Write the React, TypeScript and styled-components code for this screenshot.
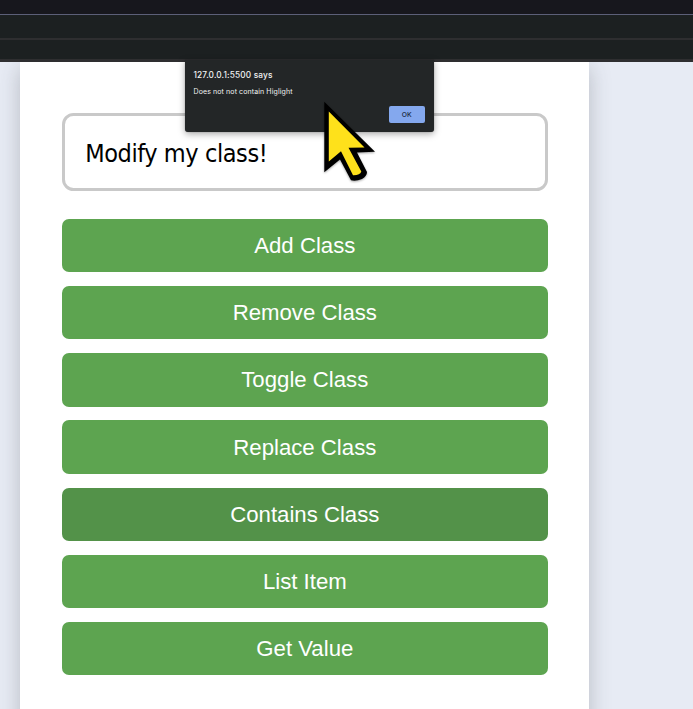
import React from "react";
import styled, { createGlobalStyle } from "styled-components";

const GlobalStyle = createGlobalStyle`
  * { box-sizing: border-box; }
  html, body { margin: 0; padding: 0; overflow: hidden; }
  body { background: #e7ebf4; }
`;

const Screen = styled.div`
  position: relative;
  display: flex;
  flex-direction: column;
  width: 693px;
  height: 709px;
  overflow: hidden;
  background: #e7ebf4;
`;

const TabStrip = styled.div`
  height: 15px;
  flex: none;
  background: #17171d;
  border-bottom: 1px solid #5c5f78;
`;

const BrowserBar = styled.div<{ $height: number; $line: number }>`
  height: ${(p) => p.$height}px;
  flex: none;
  background: #1c2021;
  border-bottom: ${(p) => p.$line}px solid #2e2e30;
`;

const Viewport = styled.div`
  flex: 1;
  min-height: 0;
  padding: 0 103.7px 0 20px;
  overflow: hidden;
`;

const Card = styled.main`
  height: 720px;
  padding: 51.3px 41.5px 0 41.8px;
  background: #fff;
  box-shadow: 0 6px 20px rgba(60, 64, 70, 0.28);
`;

const TextBox = styled.div`
  display: flex;
  align-items: center;
  height: 77.6px;
  padding: 3px 0 0 20.4px;
  border: 3px solid #c9c9c9;
  border-radius: 11.5px;
  font-family: "DejaVu Sans Condensed", "DejaVu Sans", sans-serif;
  font-stretch: condensed;
  font-size: 25px;
  line-height: 34px;
  letter-spacing: -0.42px;
  color: #000;
`;

const ButtonList = styled.div`
  display: flex;
  flex-direction: column;
  gap: 13.85px;
  margin-top: 27.8px;
`;

const ActionButton = styled.button<{ $active?: boolean }>`
  height: 53.4px;
  padding: 1px 0 0;
  border: 0;
  border-radius: 7px;
  background: ${(p) => (p.$active ? "#539249" : "#5da450")};
  color: #fff;
  font: 22.2px/26px "Liberation Sans", Arial, sans-serif;
`;

const Dialog = styled.div`
  position: absolute;
  left: 184.5px;
  top: 60px;
  width: 249px;
  height: 72.3px;
  padding: 10px 9px 9px;
  display: flex;
  flex-direction: column;
  border-radius: 0 0 3px 3px;
  background: #232627;
  color: #f1f2f2;
  font-family: Inter, sans-serif;
  box-shadow: 0 2px 7px rgba(0, 0, 0, 0.35), 0 0 1px rgba(0, 0, 0, 0.5);
`;

const DialogTitle = styled.div`
  font-size: 8.3px;
  line-height: 10px;
  letter-spacing: 0.14px;
  font-weight: 500;
`;

const DialogMessage = styled.div`
  margin-top: 7px;
  font-size: 7px;
  line-height: 9px;
  letter-spacing: 0.11px;
`;

const OkButton = styled.button`
  align-self: flex-end;
  margin-top: auto;
  width: 35.5px;
  height: 17.5px;
  padding: 0;
  border: 0;
  border-radius: 2px;
  background: #84a8ee;
  color: #202b40;
  font: 500 6.8px/17px Inter, sans-serif;
`;

const Cursor = styled.svg`
  position: absolute;
  left: 310px;
  top: 90px;
  width: 75px;
  height: 100px;
  filter: drop-shadow(0 1px 1px rgba(0, 0, 0, 0.35));
`;

const actions = [
  "Add Class",
  "Remove Class",
  "Toggle Class",
  "Replace Class",
  "Contains Class",
  "List Item",
  "Get Value",
];

export default function App() {
  return (
    <>
      <GlobalStyle />
      <Screen>
        <TabStrip />
        <BrowserBar $height={25} $line={2} />
        <BrowserBar $height={22} $line={3} />
        <Viewport>
          <Card>
            <TextBox>Modify my class!</TextBox>
            <ButtonList>
              {actions.map((label) => (
                <ActionButton key={label} $active={label === "Contains Class"}>
                  {label}
                </ActionButton>
              ))}
            </ButtonList>
          </Card>
        </Viewport>
        <Dialog>
          <DialogTitle>127.0.0.1:5500 says</DialogTitle>
          <DialogMessage>Does not not contain Higlight</DialogMessage>
          <OkButton>OK</OkButton>
        </Dialog>
        <Cursor viewBox="0 0 75 100">
          <path
            d="M14.3 11.7 L65 61.8 L47 62.5 L57 82 Q57 86 52 89 Q46 91.5 41 90.3 L30 69.5 L14.3 82.3 Z"
            fill="#000"
          />
          <path
            d="M18.8 21.5 L54.5 57.6 L38.5 57.8 L51.3 81.5 Q50 85.5 43 85.3 L31 61.3 L18.8 71.5 Z"
            fill="#fee11b"
          />
        </Cursor>
      </Screen>
    </>
  );
}
